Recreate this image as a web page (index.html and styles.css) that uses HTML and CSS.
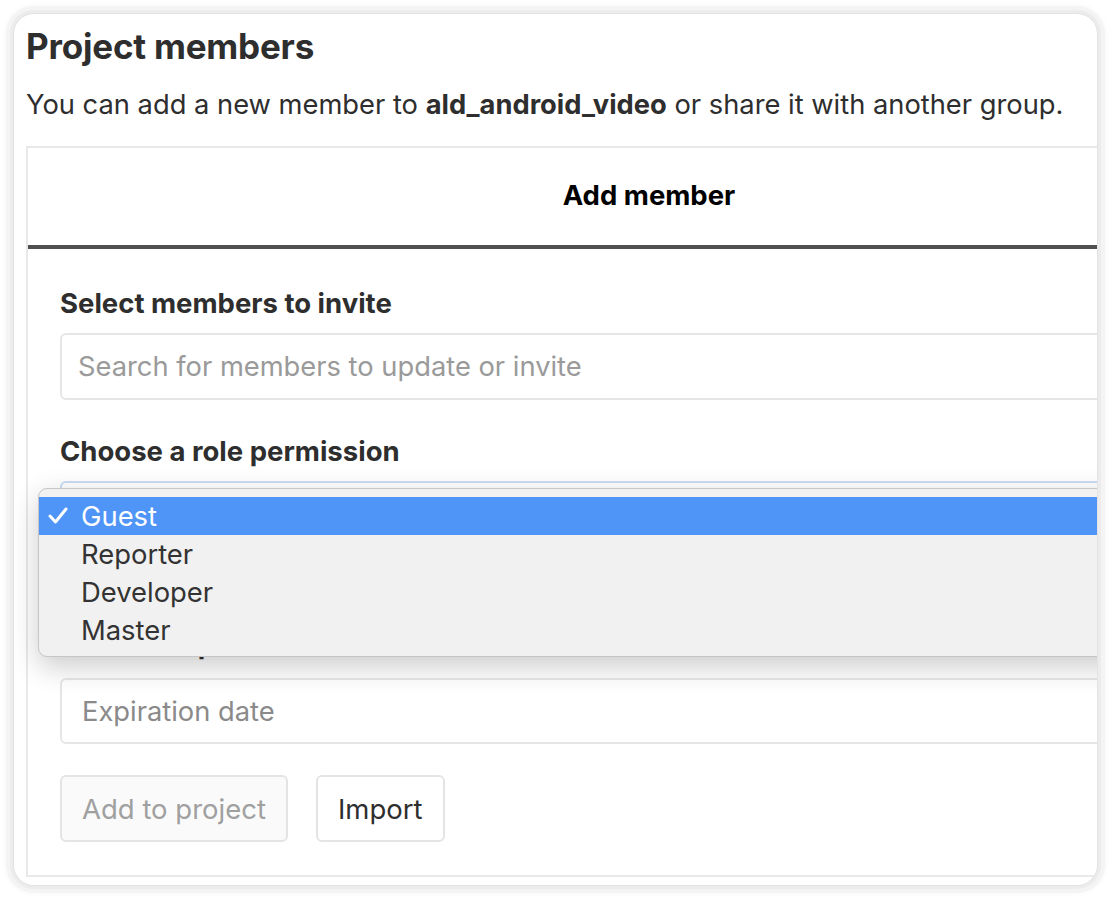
FILE: index.html
```
<!DOCTYPE html>
<html lang="en">
<head>
<meta charset="utf-8">
<title>Project members</title>
<link rel="stylesheet" href="styles.css">
</head>
<body>
<div class="card">
  <h1 class="title">Project members</h1>
  <p class="intro">You can add a new member to <strong>ald_android_video</strong> or share it with another group.</p>
  <div class="panel">
    <div class="tab">Add member</div>
    <div class="form">
      <label class="label">Select members to invite</label>
      <div class="input placeholder">Search for members to update or invite</div>

      <label class="label gap">Choose a role permission</label>
      <div class="select-wrap">
        <div class="select"></div>
        <div class="menu">
          <div class="opt selected">
            <svg class="check" width="20" height="18" viewBox="0 0 20 18"><polyline points="2,9 7.5,15 18,2" fill="none" stroke="#fff" stroke-width="3" stroke-linecap="round" stroke-linejoin="round"/></svg>
            <span>Guest</span>
          </div>
          <div class="opt"><span>Reporter</span></div>
          <div class="opt"><span>Developer</span></div>
          <div class="opt"><span>Master</span></div>
        </div>
      </div>

      <label class="label after-select">Access expiration date</label>
      <div class="input placeholder date">Expiration date</div>

      <div class="actions">
        <button class="btn disabled">Add to project</button>
        <button class="btn">Import</button>
      </div>
    </div>
  </div>
</div>
</body>
</html>
```
FILE: styles.css
```
html, body {
  margin: 0;
  padding: 0;
  background: #ffffff;
}
body {
  font-family: Inter, "Noto Sans", "Liberation Sans", sans-serif;
  color: #2e2e2e;
  padding: 14px 15px 15px 14px;
}
.card {
  height: 871px;
  box-sizing: border-box;
  background: #fff;
  border-radius: 20px;
  overflow: hidden;
  padding: 12px 0 0 12px;
  box-shadow: 0 0 0 1px #e3e3e3, 0 0 0 4px #ececec, 0 0 0 8px #f4f4f4, 0 0 4px 9px #f8f8f8;
}
.title {
  margin: 0;
  font-size: 35px;
  line-height: 40px;
  font-weight: 700;
  color: #2e2e2e;
  letter-spacing: -0.2px;
}
.intro {
  margin: 21px 0 0 0;
  font-size: 27.3px;
  line-height: 36px;
  white-space: nowrap;
  color: #2e2e2e;
}
.intro strong { font-weight: 700; }
.panel {
  margin-top: 23px;
  width: 1246px;
  border: 2px solid #e9e9e9;
  box-sizing: border-box;
}
.tab {
  height: 101px;
  box-sizing: border-box;
  padding-bottom: 3px;
  display: flex;
  align-items: center;
  justify-content: center;
  font-size: 27.5px;
  font-weight: 700;
  color: #000;
  border-bottom: 4px solid #505050;
}
.form {
  padding: 37px 32px 33px 32px;
  display: flex;
  flex-direction: column;
  align-items: flex-start;
}
.label {
  display: block;
  font-size: 27.5px;
  line-height: 34px;
  font-weight: 700;
  color: #2e2e2e;
  margin-bottom: 13px;
}
.label.gap { margin-top: 34px; }
.label.after-select { margin-top: 80px; margin-bottom: 17px; }
.input {
  width: 100%;
  height: 67px;
  box-sizing: border-box;
  border: 2px solid #e6e6e6;
  border-radius: 6px;
  display: flex;
  align-items: center;
  padding-left: 16px;
  font-size: 27.3px;
}
.placeholder { color: #9a9a9a; }
.input.date { height: 66px; padding-left: 20px; color: #8a8a8a; }
.select-wrap {
  position: relative;
  width: 100%;
}
.select {
  height: 66px;
  box-sizing: border-box;
  border: 2px solid #c9def4;
  border-radius: 6px;
  background: #fff;
}
.menu {
  position: absolute;
  left: -22px;
  top: 7px;
  width: 1200px;
  height: 169px;
  box-sizing: border-box;
  background: #f1f1f1;
  border: 1px solid #c6c6c6;
  border-radius: 9px;
  padding-top: 8px;
  box-shadow: 0 12px 28px rgba(0,0,0,0.16), 0 0 30px rgba(0,0,0,0.05);
  z-index: 5;
}
.opt {
  height: 38px;
  display: flex;
  align-items: center;
  padding-left: 42px;
  position: relative;
  font-size: 27.4px;
  color: #333;
}
.opt.selected {
  background: #4f94f7;
  color: #fff;
}
.check {
  position: absolute;
  left: 9px;
  top: 10px;
}
.actions {
  margin-top: 31px;
  display: flex;
  gap: 28px;
}
.btn {
  height: 67px;
  box-sizing: border-box;
  padding: 0 20px;
  font-family: inherit;
  font-size: 27.5px;
  border: 2px solid #e4e4e4;
  border-radius: 6px;
  background: #fff;
  color: #2e2e2e;
}
.btn.disabled {
  background: #fafafa;
  color: #a0a0a0;
}
```
